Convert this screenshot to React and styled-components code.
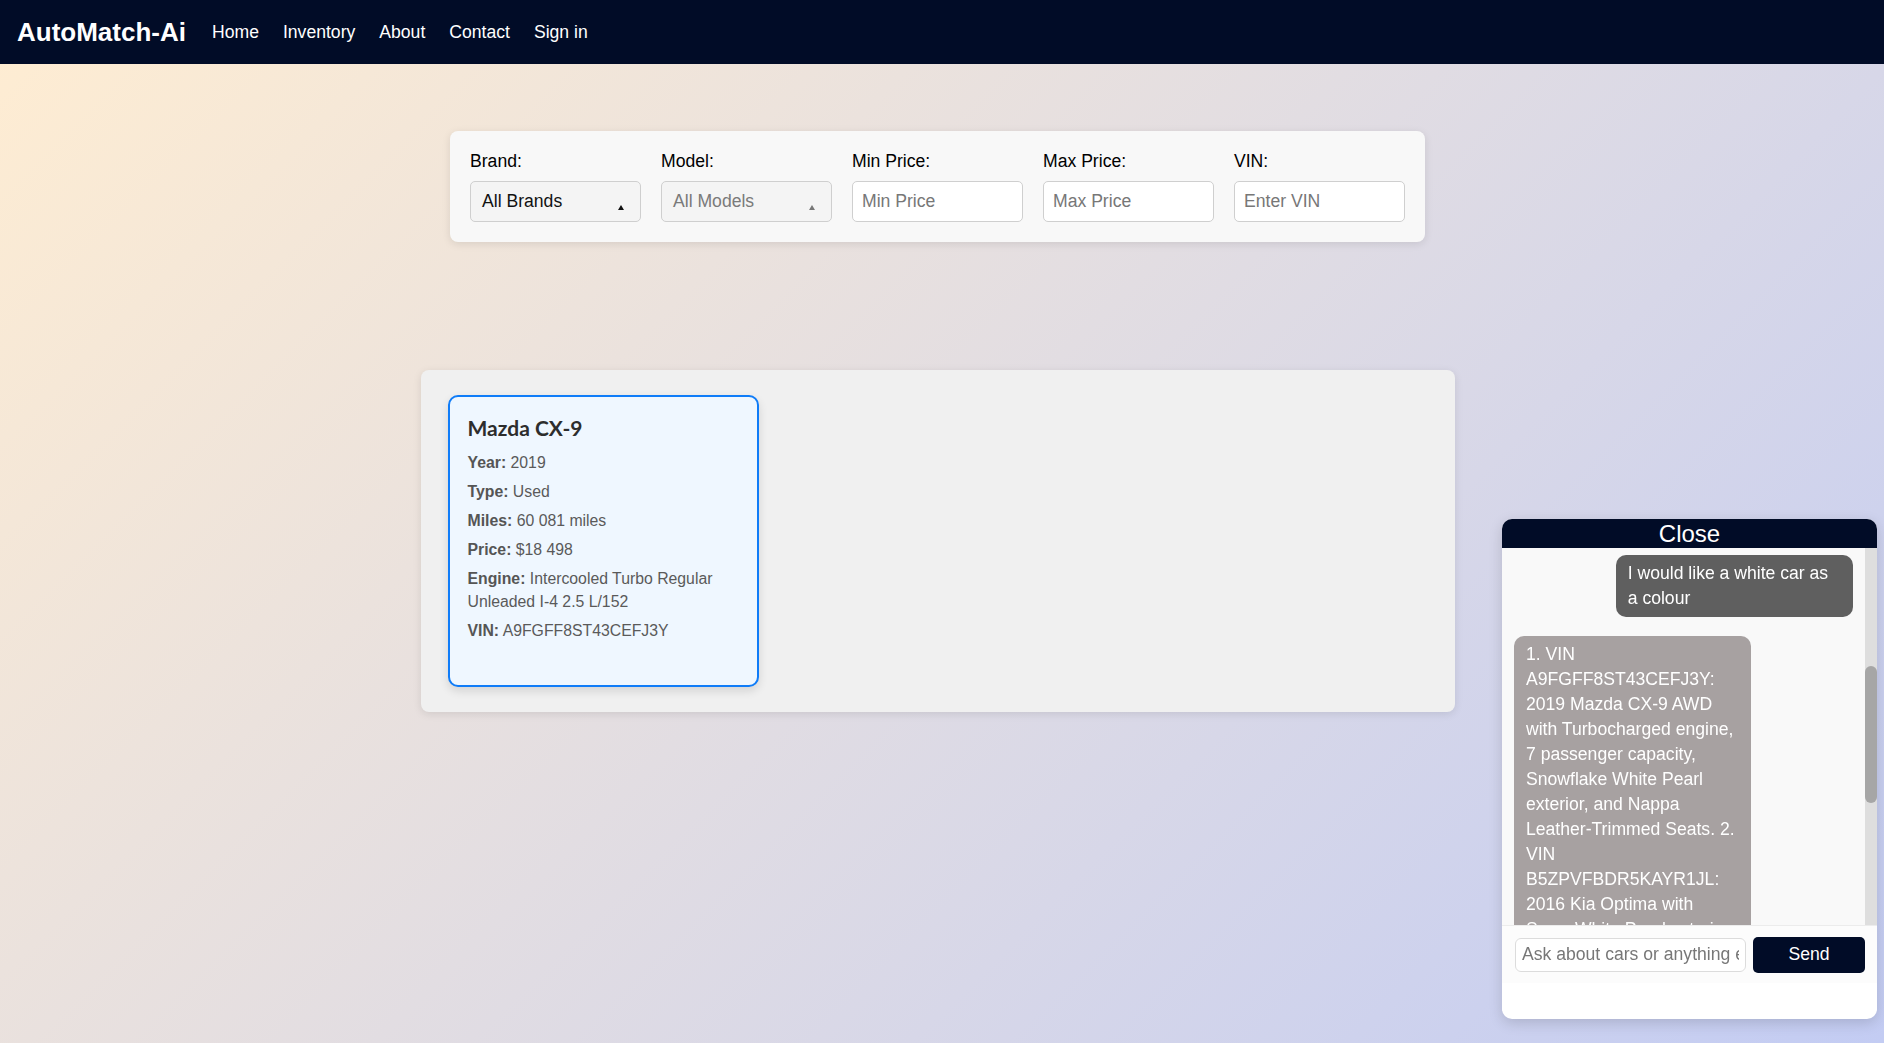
import React, { useEffect, useRef, useState } from "react";
import styled, { createGlobalStyle } from "styled-components";

const GlobalStyle = createGlobalStyle`
  html, body {
    margin: 0;
    padding: 0;
  }
  body {
    min-height: 100vh;
    font-family: "Liberation Sans", Arial, sans-serif;
    background: linear-gradient(135deg, #ffedd2 0%, #c3ccf3 100%) fixed;
  }
  * {
    box-sizing: border-box;
  }
`;

const NavBar = styled.nav`
  height: 64px;
  background: #010c27;
  display: flex;
  align-items: center;
  padding: 0 17px;
  gap: 24px;
`;

const Logo = styled.div`
  color: #fff;
  font-size: 26px;
  font-weight: bold;
  margin-right: 2px;
`;

const NavLink = styled.a`
  color: #fff;
  font-size: 17.6px;
  text-decoration: none;
  cursor: pointer;
`;

const Main = styled.main`
  display: flex;
  flex-direction: column;
  align-items: center;
  padding-right: 9px;
`;

const FilterPanel = styled.div`
  margin-top: 67px;
  background: #f8f8f8;
  border-radius: 8px;
  box-shadow: 0 2px 8px rgba(0, 0, 0, 0.1);
  padding: 20px;
  display: grid;
  grid-template-columns: repeat(5, 171px);
  column-gap: 20px;
`;

const Field = styled.div`
  display: flex;
  flex-direction: column;
`;

const Label = styled.label`
  font-size: 17.6px;
  line-height: 20px;
  color: #000;
  margin-bottom: 10px;
`;

const SelectBox = styled.div`
  position: relative;
  height: 41px;
  border: 1px solid #cfcfcf;
  border-radius: 5px;
  background: #f4f4f4;
  display: flex;
  align-items: center;
  padding: 0 11px;
  font-size: 17.6px;
  color: ${(p) => (p.disabled ? "#7a7a7a" : "#111")};

  &::after {
    content: "";
    position: absolute;
    right: 16px;
    top: 23px;
    border-left: 3px solid transparent;
    border-right: 3px solid transparent;
    border-bottom: 5px solid ${(p) => (p.disabled ? "#777" : "#111")};
  }
`;

const Input = styled.input`
  height: 41px;
  width: 100%;
  border: 1px solid #cfcfcf;
  border-radius: 5px;
  background: #fff;
  padding: 0 9px;
  font-family: "Liberation Sans", Arial, sans-serif;
  font-size: 17.6px;
  color: #111;
  outline: none;

  &::placeholder {
    color: #777;
  }
`;

const Results = styled.section`
  margin-top: 128px;
  width: 1034px;
  background: #f0f0f0;
  border-radius: 8px;
  box-shadow: 0 2px 8px rgba(0, 0, 0, 0.1);
  padding: 25px 27px;
  display: flex;
  flex-wrap: wrap;
  gap: 20px;
`;

const CarCard = styled.div`
  width: 311px;
  height: 292px;
  background: #eff7ff;
  border: 2px solid #0f7cf8;
  border-radius: 10px;
  box-shadow: 0 4px 10px rgba(0, 0, 0, 0.12);
  padding: 18px;
`;

const CarTitle = styled.h3`
  margin: 0 0 10px;
  font-family: Lato, "Liberation Sans", sans-serif;
  font-weight: bold;
  font-size: 21px;
  line-height: 26px;
  color: #2d2d2d;
`;

const Detail = styled.p`
  margin: 0 0 6px;
  font-size: 15.8px;
  line-height: 23px;
  color: #5a5a5a;

  b {
    color: #555;
  }
`;

const ChatBox = styled.div`
  position: fixed;
  right: 7px;
  bottom: 24px;
  width: 375px;
  height: 500px;
  background: #fff;
  border-radius: 10px;
  box-shadow: 0 4px 14px rgba(0, 0, 0, 0.15);
  overflow: hidden;
  display: flex;
  flex-direction: column;
`;

const CloseButton = styled.button`
  height: 29px;
  flex: none;
  border: none;
  background: #010c27;
  color: #fff;
  font-family: "Liberation Sans", Arial, sans-serif;
  font-size: 24px;
  line-height: 29px;
  padding: 0;
  cursor: pointer;
`;

const MessagesWrap = styled.div`
  height: 377px;
  flex: none;
  display: flex;
  background: #f9f9f9;
`;

const Messages = styled.div`
  flex: 1;
  min-width: 0;
  overflow-y: scroll;
  padding: 12px 12px;
  display: flex;
  flex-direction: column;
  gap: 19px;
  scrollbar-width: none;

  &::-webkit-scrollbar {
    display: none;
  }
`;

const ScrollTrack = styled.div`
  position: relative;
  width: 12px;
  flex: none;
  background: #dedede;
`;

const ScrollThumb = styled.div`
  position: absolute;
  left: 0;
  right: 0;
  border-radius: 6px;
  background: #a6a6a6;
`;

const Bubble = styled.div`
  max-width: 70%;
  flex: none;
  padding: 6px 12px;
  border-radius: 10px;
  font-size: 17.6px;
  line-height: 25px;
  color: #fff;
  align-self: ${(p) => (p.user ? "flex-end" : "flex-start")};
  background: ${(p) => (p.user ? "#5f5f5f" : "#a7a1a1")};
`;

const InputRow = styled.div`
  height: 58px;
  flex: none;
  background: #fcfcfc;
  border-top: 1px solid #ececec;
  display: flex;
  align-items: center;
  gap: 7px;
  padding: 0 12px 0 13px;
`;

const ChatInput = styled.input`
  flex: 1;
  min-width: 0;
  height: 34px;
  border: 1px solid #dcdcdc;
  border-radius: 6px;
  padding: 0 6px;
  font-family: "Liberation Sans", Arial, sans-serif;
  font-size: 17.6px;
  outline: none;

  &::placeholder {
    color: #777;
  }
`;

const SendButton = styled.button`
  width: 112px;
  height: 36px;
  border: none;
  border-radius: 5px;
  background: #010c27;
  color: #fff;
  font-family: "Liberation Sans", Arial, sans-serif;
  font-size: 17.6px;
  cursor: pointer;
`;

const cars = [
  {
    name: "Mazda CX-9",
    year: 2019,
    type: "Used",
    miles: "60 081 miles",
    price: "$18 498",
    engine: "Intercooled Turbo Regular Unleaded I-4 2.5 L/152",
    vin: "A9FGFF8ST43CEFJ3Y",
  },
];

const history = [
  { user: false, text: "Hi! I'm the AutoMatch assistant. Ask me about the cars in our inventory or anything else." },
  { user: true, text: "Do you have any SUVs or family cars in stock?" },
  { user: false, text: "Yes, we have several SUVs in stock. Is there a colour you prefer?" },
];

const lastReply =
  "1. VIN A9FGFF8ST43CEFJ3Y: 2019 Mazda CX-9 AWD with Turbocharged engine, 7 passenger capacity, Snowflake White Pearl exterior, and Nappa Leather-Trimmed Seats. 2. VIN B5ZPVFBDR5KAYR1JL: 2016 Kia Optima with Snow White Pearl exterior, 2.4 L I-4 engine, and cloth seats. Would you like to book a test drive for one of them? I can also show you other white cars in our inventory, filter them by price range, or compare the features of these two models side by side. Just tell me which option you prefer and I will prepare the details for you.";

function App() {
  const listRef = useRef(null);
  const askRef = useRef(null);
  const [thumb, setThumb] = useState({ top: 0, height: 0 });

  const updateThumb = () => {
    const el = listRef.current;
    if (!el) return;
    const track = el.clientHeight;
    setThumb({
      top: (el.scrollTop / el.scrollHeight) * track,
      height: (el.clientHeight / el.scrollHeight) * track,
    });
  };

  useEffect(() => {
    if (listRef.current && askRef.current) {
      listRef.current.scrollTop = askRef.current.offsetTop - listRef.current.offsetTop - 7;
    }
    updateThumb();
  }, []);

  return (
    <>
      <GlobalStyle />
      <NavBar>
        <Logo>AutoMatch-Ai</Logo>
        <NavLink>Home</NavLink>
        <NavLink>Inventory</NavLink>
        <NavLink>About</NavLink>
        <NavLink>Contact</NavLink>
        <NavLink>Sign in</NavLink>
      </NavBar>

      <Main>
        <FilterPanel>
          <Field>
            <Label>Brand:</Label>
            <SelectBox>All Brands</SelectBox>
          </Field>
          <Field>
            <Label>Model:</Label>
            <SelectBox disabled>All Models</SelectBox>
          </Field>
          <Field>
            <Label>Min Price:</Label>
            <Input placeholder="Min Price" />
          </Field>
          <Field>
            <Label>Max Price:</Label>
            <Input placeholder="Max Price" />
          </Field>
          <Field>
            <Label>VIN:</Label>
            <Input placeholder="Enter VIN" />
          </Field>
        </FilterPanel>

        <Results>
          {cars.map((car) => (
            <CarCard key={car.vin}>
              <CarTitle>{car.name}</CarTitle>
              <Detail><b>Year:</b> {car.year}</Detail>
              <Detail><b>Type:</b> {car.type}</Detail>
              <Detail><b>Miles:</b> {car.miles}</Detail>
              <Detail><b>Price:</b> {car.price}</Detail>
              <Detail><b>Engine:</b> {car.engine}</Detail>
              <Detail><b>VIN:</b> {car.vin}</Detail>
            </CarCard>
          ))}
        </Results>
      </Main>

      <ChatBox>
        <CloseButton>Close</CloseButton>
        <MessagesWrap>
          <Messages ref={listRef} onScroll={updateThumb}>
            {history.map((m, i) => (
              <Bubble key={i} user={m.user}>{m.text}</Bubble>
            ))}
            <Bubble user ref={askRef}>I would like a white car as a colour</Bubble>
            <Bubble>{lastReply}</Bubble>
          </Messages>
          <ScrollTrack>
            <ScrollThumb style={{ top: thumb.top, height: thumb.height }} />
          </ScrollTrack>
        </MessagesWrap>
        <InputRow>
          <ChatInput placeholder="Ask about cars or anything else..." />
          <SendButton>Send</SendButton>
        </InputRow>
      </ChatBox>
    </>
  );
}

export default App;
